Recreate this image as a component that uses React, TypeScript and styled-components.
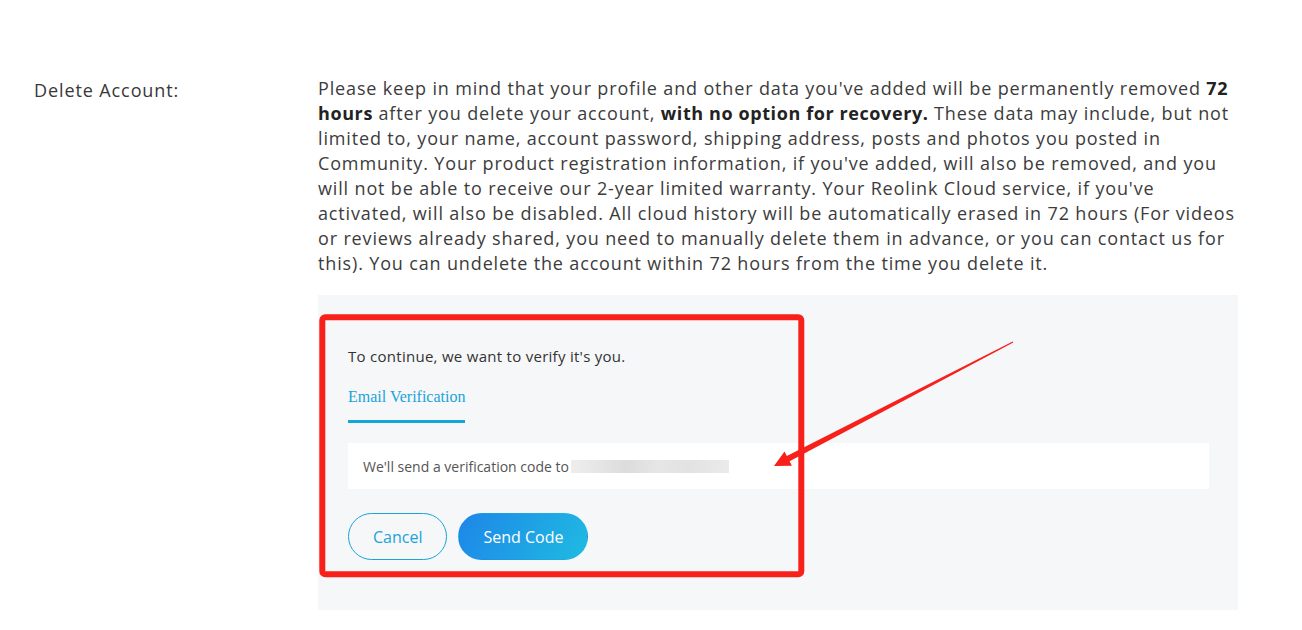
import styled, { createGlobalStyle } from 'styled-components'

const GlobalStyle = createGlobalStyle`
    body {
        margin: 0;
        background: #ffffff;
        font-family: "Open Sans", "Liberation Sans", sans-serif;
        color: #333333;
    }
`

const Page = styled.div`
    display: flex;
    padding: 76px 0 0 34px;
`

const Label = styled.div`
    width: 284px;
    flex-shrink: 0;
    font-size: 18px;
    line-height: 25px;
    letter-spacing: 0.9px;
    padding-top: 2px;
    color: #383838;
`

const Content = styled.div`
    width: 920px;
`

const Notice = styled.p`
    margin: 0 0 19px;
    font-size: 18px;
    line-height: 25px;
    letter-spacing: 0.85px;
    color: #3c3c3c;
    white-space: nowrap;
    b {
        font-weight: 700;
        letter-spacing: 0.6px;
        color: #222;
    }
`

const Panel = styled.div`
    position: relative;
    background: #f6f7f9;
    padding: 51px 29px 50px 30px;
`

const Prompt = styled.div`
    font-size: 15px;
    line-height: 20px;
    letter-spacing: 0.28px;
    color: #333;
`

const Tabs = styled.div`
    display: flex;
    margin-top: 21px;
`

const Tab = styled.div<{ active?: boolean }>`
    font-family: "Liberation Serif", serif;
    font-size: 16px;
    line-height: 20px;
    color: ${props => props.active ? '#1aa3d9' : '#666'};
    padding-bottom: 13px;
    border-bottom: 3px solid ${props => props.active ? '#14a6d9' : 'transparent'};
`

const CodeBox = styled.div`
    display: flex;
    align-items: center;
    height: 46px;
    margin-top: 20px;
    padding: 0 15px;
    background: #ffffff;
    font-size: 14px;
    color: #555;
`

const Blurred = styled.span`
    display: inline-block;
    width: 158px;
    height: 13px;
    margin-left: 2px;
    background: linear-gradient(90deg, #eeeeee 0%, #e4e4e4 20%, #dcdcdc 35%, #e6e6e6 55%, #e2e2e2 75%, #ebebeb 100%);
    filter: blur(0.6px);
`

const Buttons = styled.div`
    display: flex;
    gap: 11px;
    margin-top: 24px;
`

const Button = styled.button<{ primary?: boolean }>`
    height: 47px;
    padding: 0 24px;
    border-radius: 24px;
    font-family: inherit;
    font-size: 16px;
    cursor: pointer;
    border: 1px solid ${props => props.primary ? 'transparent' : '#1aa3d9'};
    color: ${props => props.primary ? '#ffffff' : '#1aa3d9'};
    background: ${props => props.primary ? 'linear-gradient(120deg, #1e86e8 0%, #1fbbe2 100%)' : 'transparent'};
`

const Markup = styled.svg`
    position: absolute;
    left: 0;
    top: 0;
    pointer-events: none;
    overflow: visible;
`

function App() {
    return (
        <>
            <GlobalStyle />
            <Page>
                <Label>Delete Account:</Label>
                <Content>
                    <Notice>
                        Please keep in mind that your profile and other data you've added will be permanently removed <b>72</b><br />
                        <b>hours</b> after you delete your account, <b>with no option for recovery.</b> These data may include, but not<br />
                        limited to, your name, account password, shipping address, posts and photos you posted in<br />
                        Community. Your product registration information, if you've added, will also be removed, and you<br />
                        will not be able to receive our 2-year limited warranty. Your Reolink Cloud service, if you've<br />
                        activated, will also be disabled. All cloud history will be automatically erased in 72 hours (For videos<br />
                        or reviews already shared, you need to manually delete them in advance, or you can contact us for<br />
                        this). You can undelete the account within 72 hours from the time you delete it.
                    </Notice>
                    <Panel>
                        <Prompt>To continue, we want to verify it's you.</Prompt>
                        <Tabs>
                            <Tab active>Email Verification</Tab>
                        </Tabs>
                        <CodeBox>
                            We'll send a verification code to<Blurred />
                        </CodeBox>
                        <Buttons>
                            <Button>Cancel</Button>
                            <Button primary>Send Code</Button>
                        </Buttons>
                        <Markup width="920" height="315" viewBox="0 0 920 315">
                            <rect x="4.3" y="22.3" width="479" height="257" rx="3" fill="none" stroke="#f8201a" strokeWidth="6" />
                            <polygon
                                fill="#f8201a"
                                points="456,171 466.5,156.5 468.8,160.9 694.7,46.5 695.3,47.5 471.6,166.3 473.9,170.7"
                            />
                        </Markup>
                    </Panel>
                </Content>
            </Page>
        </>
    )
}

export default App
